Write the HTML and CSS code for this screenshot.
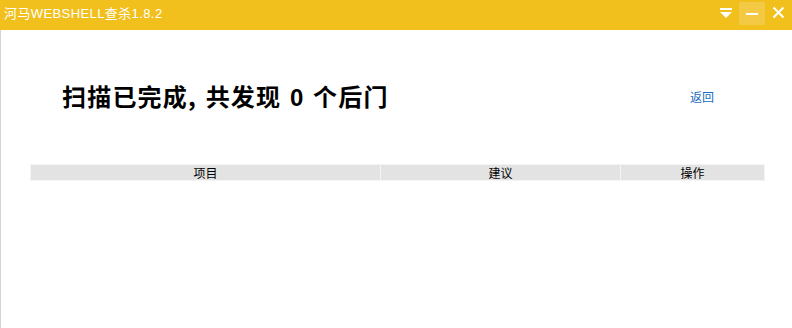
FILE: index.html
```html
<!DOCTYPE html>
<html lang="zh-CN">
<head>
<meta charset="utf-8">
<title>河马WEBSHELL查杀1.8.2</title>
<link rel="stylesheet" href="styles.css">
</head>
<body>
<div class="window">
  <header class="titlebar">
    <span class="title">河马WEBSHELL查杀1.8.2</span>
    <div class="controls">
      <span class="ctl menu">
        <svg width="14" height="12" viewBox="0 0 14 12"><rect x="1" y="1" width="12" height="2" fill="#fff"/><path d="M1 5 H13 L7 11 Z" fill="#fff"/></svg>
      </span>
      <span class="ctl min">
        <svg width="12" height="4" viewBox="0 0 12 4"><rect x="0" y="1" width="12" height="2" fill="#fff"/></svg>
      </span>
      <span class="ctl close">
        <svg width="13" height="13" viewBox="0 0 13 13"><path d="M1.5 1.5 L11.5 11.5 M11.5 1.5 L1.5 11.5" stroke="#fff" stroke-width="2"/></svg>
      </span>
    </div>
  </header>
  <main class="content">
    <div class="result">
      <h1 class="headline">扫描已完成, 共发现 <b class="num">0</b> 个后门</h1>
      <a class="back" href="#">返回</a>
    </div>
    <table class="grid">
      <thead>
        <tr>
          <th class="c1">项目</th>
          <th class="c2">建议</th>
          <th class="c3">操作</th>
        </tr>
      </thead>
    </table>
  </main>
</div>
</body>
</html>
```

FILE: styles.css
```css
html, body {
  margin: 0;
  padding: 0;
  background: #fff;
}
body {
  font-family: "Liberation Sans", "Noto Sans CJK SC", sans-serif;
  width: 792px;
  height: 328px;
  overflow: hidden;
}
.window {
  height: 328px;
  border-left: 1px solid #d4d4d4;
  box-sizing: border-box;
}
.titlebar {
  height: 30px;
  background: #f2c01d;
  display: flex;
  align-items: center;
  justify-content: space-between;
  margin-left: -1px;
}
.title {
  color: #fff;
  font-size: 13px;
  letter-spacing: 0.4px;
  padding-left: 4px;
  margin-top: -6px;
}
.controls {
  display: flex;
  align-items: flex-start;
  height: 30px;
}
.ctl {
  display: flex;
  align-items: center;
  justify-content: center;
}
.menu {
  width: 26px;
  height: 24px;
  margin-top: 1px;
}
.min {
  width: 26px;
  height: 23px;
  margin-top: 2px;
  background: #f4ca45;
}
.close {
  width: 27px;
  height: 24px;
  margin-top: 0;
}
.content {
  padding: 0 27px 0 29px;
}
.result {
  display: flex;
  justify-content: space-between;
  align-items: center;
  padding: 50px 51px 0 32px;
  height: 34px;
}
.headline {
  margin: 0;
  font-size: 24px;
  font-weight: bold;
  color: #000;
  font-family: "Noto Sans CJK SC", sans-serif;
  line-height: 32px;
  letter-spacing: 1.2px;
  word-spacing: 2px;
}
.num {
  font-family: "Liberation Sans", sans-serif;
}
.back {
  color: #1a6cbf;
  font-size: 12px;
  text-decoration: none;
  font-family: "Noto Sans CJK SC", sans-serif;
  margin-top: -2px;
}
.grid {
  margin-top: 50px;
  width: 735px;
  border-collapse: separate;
  border-spacing: 1px;
  border: 0;
  background: #f4f4f4;
}
.grid th {
  background: #e3e3e3;
  font-weight: normal;
  font-size: 12px;
  height: 15px;
  line-height: 15px;
  padding: 0;
  color: #000;
  font-family: "Noto Sans CJK SC", sans-serif;
}
.c1 { width: 349px; }
.c2 { width: 239px; }
.c3 { width: 143px; }
```
